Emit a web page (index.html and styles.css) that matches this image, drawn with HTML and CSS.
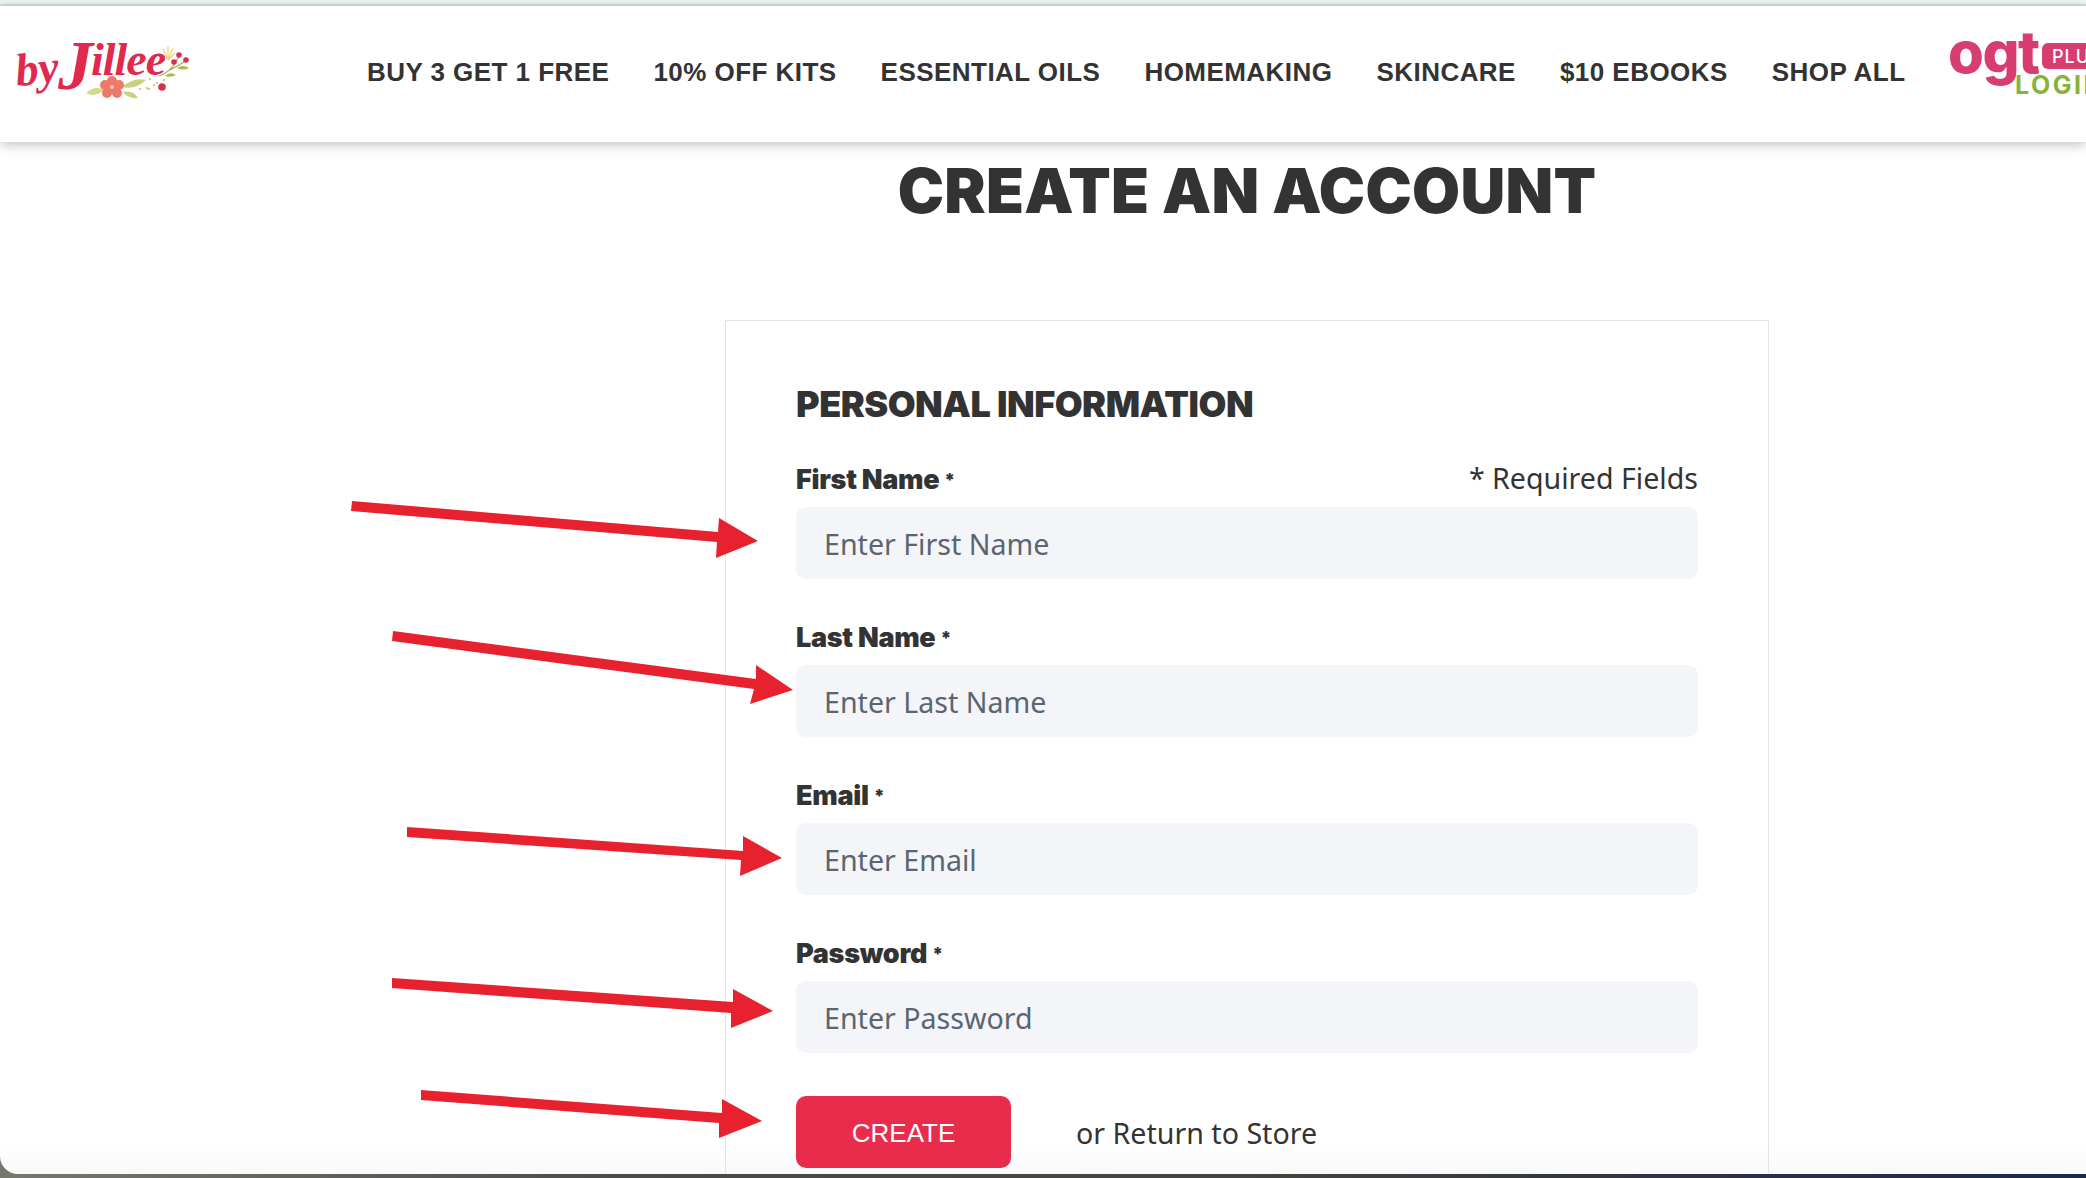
FILE: index.html
```html
<!DOCTYPE html>
<html lang="en">
<head>
    <meta charset="UTF-8">
    <meta name="viewport" content="width=device-width, initial-scale=1.0">
    <title>Create an Account</title>
    <link rel="stylesheet" href="styles.css">
</head>
<body>
    <div class="window">
        <div class="top-strip"></div>

        <header class="header">
            <svg class="logo" viewBox="0 6 200 136" width="200" height="136" aria-label="by Jillee">
                <text class="logo-by" x="17" y="86" transform="rotate(-6 17 86)">by</text>
                <text class="logo-name"><tspan class="logo-j" x="58" y="89">J</tspan><tspan x="91" y="75">illee</tspan></text>
                <path d="M86 93 Q95 85 104 90 Q95 98 86 93Z" fill="#d3da8c"/>
                <path d="M122 87 Q134 77 146 80 Q136 90 122 87Z" fill="#c7d27a"/>
                <path d="M123 92 Q133 90 138 98 Q128 99 123 92Z" fill="#c7d27a"/>
                <g fill="#f0786b">
                    <circle cx="112" cy="81" r="5"/>
                    <circle cx="119" cy="85" r="5"/>
                    <circle cx="117" cy="93" r="5"/>
                    <circle cx="107" cy="93" r="5"/>
                    <circle cx="105" cy="85" r="5"/>
                    <circle cx="112" cy="88" r="6"/>
                </g>
                <circle cx="112" cy="87" r="2" fill="#f9c3b4"/>
                <path d="M168 60 L163 49 M168 60 L168 46 M168 60 L173 48 M168 60 L175 53" stroke="#f0d264" stroke-width="1.2" fill="none"/>
                <path d="M159 76 Q170 72 176 62 M170 70 Q178 66 187 60 M176 62 L179 56" stroke="#9fb24d" stroke-width="1.2" fill="none"/>
                <path d="M165 76 Q170 71 176 75 Q170 78 165 76Z" fill="#a8bb52"/>
                <path d="M177 68 Q183 64 189 68 Q183 71 177 68Z" fill="#a8bb52"/>
                <g fill="#d9304f">
                    <circle cx="179" cy="55" r="2.8"/>
                    <circle cx="186" cy="60" r="2.8"/>
                    <circle cx="174" cy="62" r="2.8"/>
                    <circle cx="162" cy="87" r="3.8"/>
                </g>
                <g fill="#dcb74e">
                    <circle cx="150" cy="79" r="1.1"/>
                    <circle cx="157" cy="83" r="1.1"/>
                    <circle cx="164" cy="80" r="1.1"/>
                    <circle cx="147" cy="88" r="1.1"/>
                    <circle cx="140" cy="89" r="1.1"/>
                    <circle cx="149" cy="89" r="1.1"/>
                    <circle cx="154" cy="85" r="1.1"/>
                </g>
            </svg>

            <nav class="nav">
                <a href="#">BUY 3 GET 1 FREE</a>
                <a href="#">10% OFF KITS</a>
                <a href="#">ESSENTIAL OILS</a>
                <a href="#">HOMEMAKING</a>
                <a href="#">SKINCARE</a>
                <a href="#">$10 EBOOKS</a>
                <a href="#">SHOP ALL</a>
                <svg class="ogt" viewBox="1948 6 170 136" width="170" height="136" aria-label="ogt Plus Login">
                    <text class="ogt-word" x="1946" y="73">ogt</text>
                    <rect x="2040" y="43" width="76" height="26" rx="6" fill="#d83d6f"/>
                    <text class="ogt-plus" x="2050" y="63">PLUS</text>
                    <text class="ogt-login" x="2013" y="94">LOGIN</text>
                </svg>
            </nav>
        </header>

        <main class="main">
            <h1 class="page-title">CREATE AN ACCOUNT</h1>

            <form class="card">
                <h2 class="card-title">PERSONAL INFORMATION</h2>
                <p class="required-note">* Required Fields</p>

                <div class="field">
                    <label class="field-label" for="firstName">First Name <span class="star">*</span></label>
                    <input class="field-input" id="firstName" type="text" placeholder="Enter First Name">
                </div>
                <div class="field">
                    <label class="field-label" for="lastName">Last Name <span class="star">*</span></label>
                    <input class="field-input" id="lastName" type="text" placeholder="Enter Last Name">
                </div>
                <div class="field">
                    <label class="field-label" for="email">Email <span class="star">*</span></label>
                    <input class="field-input" id="email" type="email" placeholder="Enter Email">
                </div>
                <div class="field">
                    <label class="field-label" for="password">Password <span class="star">*</span></label>
                    <input class="field-input" id="password" type="password" placeholder="Enter Password">
                </div>

                <div class="actions">
                    <button class="btn" type="button">CREATE</button>
                    <span class="return-link">or Return to Store</span>
                </div>
            </form>
        </main>

        <!-- red annotation arrows drawn on top of the screenshot -->
        <svg class="arrows" viewBox="0 0 2086 1178" width="2086" height="1178" aria-hidden="true">
            <polygon points="352,501 351,511 717,542 716,558 758,541 719,518 718,532"/>
            <polygon points="393,631 392,641 754,689 750,704 793,690 756,665 756,679"/>
            <polygon points="407,827 407,837 741,860 740,876 782,858 743,836 743,851"/>
            <polygon points="392,978 392,988 731,1013 731,1028 773,1011 733,989 733,1002"/>
            <polygon points="421,1090 421,1100 719,1123 719,1138 762,1121 722,1099 722,1113"/>
        </svg>
    </div>
</body>
</html>
```

FILE: styles.css
```css
* {
    margin: 0;
    padding: 0;
    box-sizing: border-box;
}

html, body {
    height: 100%;
    overflow: hidden;
}

body {
    background: linear-gradient(90deg, #77786b 0%, #4c4c47 30%, #45443f 60%, #2a3044 85%, #1c2a4a 100%);
    font-family: "Noto Sans", "Open Sans", sans-serif;
    color: #333;
}

.window {
    position: relative;
    width: 2086px;
    height: 1174px;
    background: linear-gradient(180deg, #fff 97.5%, #f9f9f9 100%);
    border-radius: 0 0 0 18px;
    overflow: hidden;
}

.top-strip {
    height: 6px;
    background: #eef7f2;
    border-bottom: 2px solid #d5e2dd;
}

.header {
    position: relative;
    display: flex;
    height: 136px;
    background-color: #fff;
    box-shadow: 0 2px 12px rgba(0, 0, 0, 0.28);
    overflow: hidden;
}

.logo {
    flex: none;
}

.logo-by {
    font: italic bold 46px "Liberation Serif", serif;
    fill: #e0294d;
}

.logo-name {
    font: italic bold 46px "Liberation Serif", serif;
    letter-spacing: -1px;
    fill: #e0294d;
}

.logo-j {
    font-size: 70px;
}

.nav {
    display: flex;
    flex: none;
    align-items: flex-start;
    gap: 44px;
    margin-left: 167px;
}

.nav a {
    margin-top: 51px;
    font: bold 26px "Liberation Sans", Arial, sans-serif;
    letter-spacing: 0.46px;
    line-height: 30px;
    color: #333;
    text-decoration: none;
    white-space: nowrap;
}

.ogt {
    flex: none;
}

.ogt-word {
    font: 800 58px "Inter", sans-serif;
    letter-spacing: -1.5px;
    fill: #d83d6f;
}

.ogt-plus {
    font: 500 18px "Inter", sans-serif;
    letter-spacing: 1px;
    fill: #fff;
}

.ogt-login {
    font: 700 25px "Inter", sans-serif;
    letter-spacing: 2.5px;
    fill: #86b33c;
}

.main {
    width: 1044px;
    margin-left: 725px;
}

.page-title {
    margin-top: 11px;
    font: 900 62px/76px "Inter", sans-serif;
    letter-spacing: 0.3px;
    text-align: center;
    color: #333;
    white-space: nowrap;
}

.card {
    position: relative;
    margin-top: 91px;
    height: 900px;
    padding: 60px 70px 0;
    border: 1px solid #e4e4e4;
}

.card-title {
    font: 900 36px/46px "Inter", sans-serif;
    letter-spacing: -0.5px;
    color: #333;
}

.required-note {
    position: absolute;
    top: 137px;
    right: 70px;
    font-size: 28.6px;
    line-height: 40px;
    color: #333;
}

.field {
    margin-top: 31px;
    margin-bottom: 37px;
}

.field-label {
    display: block;
    height: 49px;
    font: 900 27px/43px "Inter", sans-serif;
    letter-spacing: -0.3px;
    color: #333;
}

.star {
    font-size: 18px;
    vertical-align: 3px;
}

.field-input {
    display: block;
    width: 100%;
    height: 72px;
    padding: 1px 28px 0;
    background-color: #f4f5f9;
    border: none;
    border-radius: 10px;
    font-family: "Noto Sans", "Open Sans", sans-serif;
    font-size: 28.6px;
    color: #333;
}

.field-input::placeholder {
    color: #5a6570;
    opacity: 1;
}

.actions {
    display: flex;
    align-items: center;
    gap: 65px;
    margin-top: 43px;
}

.btn {
    width: 215px;
    height: 72px;
    padding-top: 2px;
    background-color: #e92c4c;
    color: #fff;
    border: none;
    border-radius: 10px;
    font: 400 26px "Liberation Sans", Arial, sans-serif;
}

.return-link {
    font-size: 28.6px;
    color: #333;
}

.arrows {
    position: absolute;
    top: 0;
    left: 0;
    pointer-events: none;
}

.arrows polygon {
    fill: #e7212d;
}
```
